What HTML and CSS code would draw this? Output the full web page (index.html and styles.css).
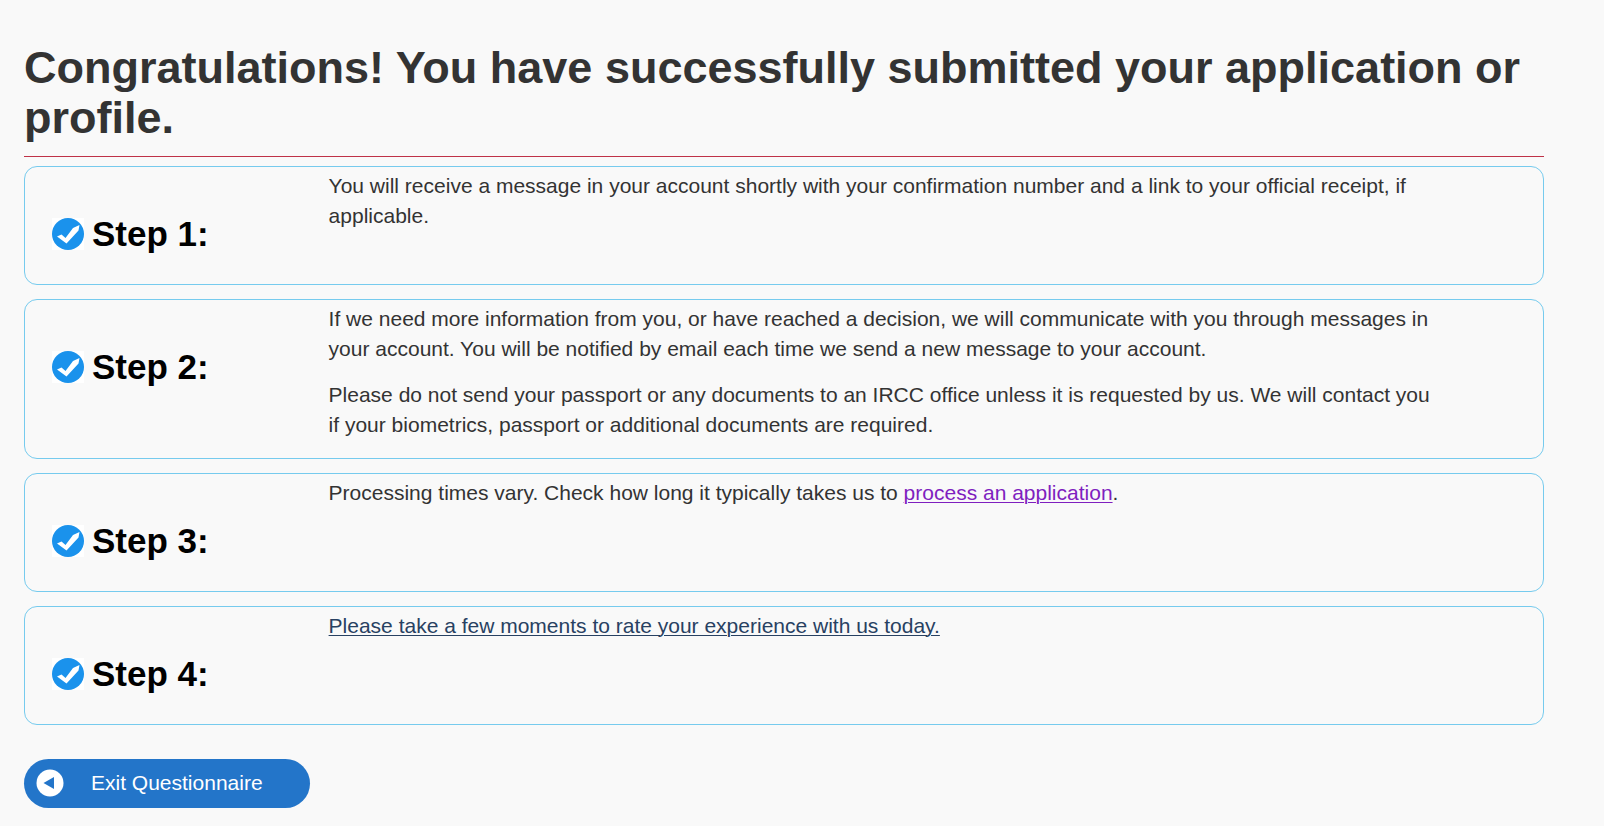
FILE: index.html
```html
<!DOCTYPE html>
<html lang="en">
<head>
    <meta charset="UTF-8">
    <meta name="viewport" content="width=device-width, initial-scale=1.0">
    <link rel="stylesheet" href="styles.css">
    <title>Application submitted</title>
</head>
<body>

  <!-- check mark used by every step -->
  <svg class="sprite" aria-hidden="true">
    <symbol id="check" viewBox="0 0 32 32">
      <rect width="32" height="32" fill="#fff"/>
      <circle cx="16" cy="16" r="16" fill="#1a92ec"/>
      <path d="M5 18.500L9.500 16.500L13.500 20L21 10L27.500 7L26.500 12.500L14.500 25.500Z" fill="#fff"/>
    </symbol>
  </svg>

  <main>
    <h1>Congratulations! You have successfully submitted your application or profile.</h1>

    <section class="step">
      <h2><svg class="check" aria-hidden="true"><use href="#check"/></svg>Step 1:</h2>
      <div class="stepText">
        <p>You will receive a message in your account shortly with your confirmation number and a link to your official receipt, if applicable.</p>
      </div>
    </section>

    <section class="step">
      <h2><svg class="check" aria-hidden="true"><use href="#check"/></svg>Step 2:</h2>
      <div class="stepText">
        <p>If we need more information from you, or have reached a decision, we will communicate with you through messages in your account. You will be notified by email each time we send a new message to your account.</p>
        <p>Please do not send your passport or any documents to an IRCC office unless it is requested by us. We will contact you if your biometrics, passport or additional documents are required.</p>
      </div>
    </section>

    <section class="step">
      <h2><svg class="check" aria-hidden="true"><use href="#check"/></svg>Step 3:</h2>
      <div class="stepText">
        <p>Processing times vary. Check how long it typically takes us to <a class="visited" href="#">process an application</a>.</p>
      </div>
    </section>

    <section class="step">
      <h2><svg class="check" aria-hidden="true"><use href="#check"/></svg>Step 4:</h2>
      <div class="stepText">
        <p><a href="#">Please take a few moments to rate your experience with us today.</a></p>
      </div>
    </section>

    <button class="btnExit" type="button">
      <svg class="arrow" viewBox="0 0 28 28" aria-hidden="true">
        <circle cx="14" cy="14" r="13.500" fill="#fff"/>
        <path d="M7.500 14L18 8v12z" fill="#2375c9"/>
      </svg>
      Exit Questionnaire
    </button>
  </main>

</body>
</html>
```

FILE: styles.css
```css
*{box-sizing: border-box;}
body
{
  margin: 0;
  font-family: "Helvetica Neue", Helvetica, "Liberation Sans", Arial, sans-serif;
  font-size: 21px;
  line-height: 30px;
  color: #333;
  background-color: #f9f9f9;
}
.sprite
{
  display: none;
}
main
{
  padding: 43px 60px 18px 24px;
}
h1
{
  margin: 0 0 9px;
  padding-bottom: 13px;
  font-size: 45px;
  line-height: 50px;
  border-bottom: 1px solid #bf3247;
}
.step
{
  display: flex;
  min-height: 119px;
  margin-bottom: 14px;
  border: 1px solid #76cbee;
  border-radius: 13px;
}
.step h2
{
  display: flex;
  align-items: center;
  align-self: flex-start;
  gap: 8px;
  width: 20%;
  margin: 0;
  padding: 47px 0 0 27px;
  font-size: 35px;
  line-height: 40px;
  color: #000;
}
.check
{
  width: 32px;
  height: 32px;
}
.stepText
{
  width: 73%;
  padding: 4px 0 2px;
}
.stepText p
{
  margin: 0 0 16px;
}
a
{
  color: #284162;
  text-underline-offset: 2px;
  text-decoration-thickness: 1px;
}
a.visited
{
  color: #7f1fbf;
}
.btnExit
{
  display: flex;
  align-items: center;
  gap: 27px;
  margin-top: 34px;
  padding: 9px 47px 10px 12px;
  font: inherit;
  color: #fff;
  background-color: #2375c9;
  border: 0;
  border-radius: 25px;
  cursor: pointer;
}
.arrow
{
  width: 28px;
  height: 28px;
}
```
